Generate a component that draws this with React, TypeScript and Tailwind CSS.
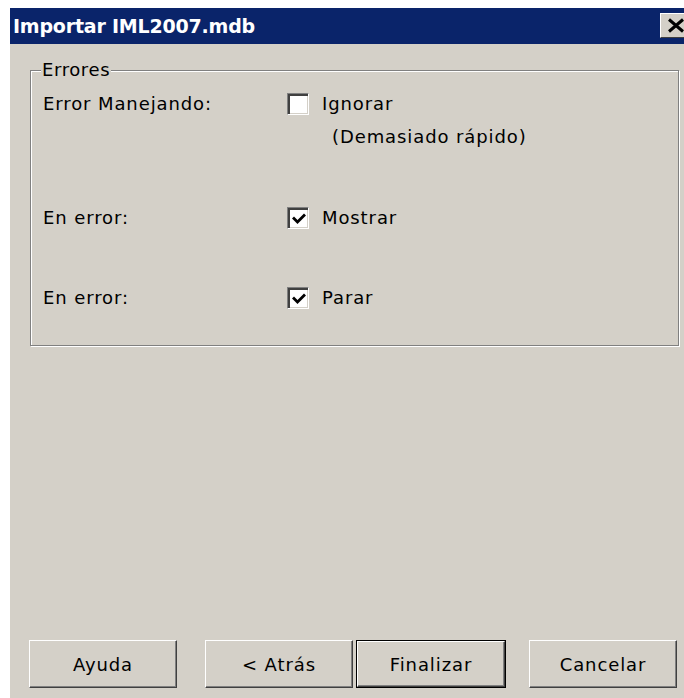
import { ReactNode } from 'react'

const font = { fontFamily: '"DejaVu Sans", Verdana, sans-serif' }

function CheckBox({ checked }: { checked?: boolean }) {
  return (
    <div className="w-[22px] h-[22px] shrink-0 bg-white border border-t-[#808080] border-l-[#808080] border-r-white border-b-white shadow-[inset_2px_2px_0_#404040,inset_-1px_-1px_0_#d4d0c8] flex items-center justify-center">
      {checked && (
        <svg width="14" height="14" viewBox="0 0 14 14" className="ml-[1px] mt-[1px]">
          <path d="M2 6.5 L5.5 10 L12 3.5" fill="none" stroke="#000" strokeWidth="2.8" strokeLinecap="square" />
        </svg>
      )}
    </div>
  )
}

function Row({ label, children, className }: { label: string; children: ReactNode; className?: string }) {
  return (
    <div className={'flex ' + (className ?? '')}>
      <div className="w-[244px] shrink-0 leading-[22px]">{label}</div>
      <div>{children}</div>
    </div>
  )
}

function Btn({ children, isDefault, className }: { children: ReactNode; isDefault?: boolean; className?: string }) {
  const inner = (
    <div className="h-full w-full flex items-center justify-center border border-t-white border-l-white border-r-[#404040] border-b-[#404040] shadow-[inset_-1px_-1px_0_#808080]">
      {children}
    </div>
  )
  if (isDefault) {
    return <div className={'h-[48px] border border-black ' + (className ?? '')}>{inner}</div>
  }
  return <div className={'h-[48px] ' + (className ?? '')}>{inner}</div>
}

export default function App() {
  return (
    <div className="w-[684px] h-[698px] bg-white pt-[8px] pl-[10px] overflow-hidden text-black text-[18px] tracking-[0.9px]" style={font}>
      <div className="h-full flex flex-col">
        {/* title bar */}
        <div className="h-[36px] bg-[#0a246a] flex items-start justify-between shrink-0">
          <div className="pl-[3px] pt-[5px] text-white font-bold text-[19px] tracking-[-0.2px] leading-[26px]">Importar IML2007.mdb</div>
          <div className="mt-[5px] mr-[-8px] w-[32px] h-[25px] bg-[#d4d0c8] border border-t-white border-l-white border-r-[#404040] border-b-[#404040] flex items-center justify-center">
            <svg width="18" height="15" viewBox="0 0 18 15">
              <path d="M2 1.5 L16 13.5 M16 1.5 L2 13.5" stroke="#000" strokeWidth="3" />
            </svg>
          </div>
        </div>

        {/* dialog body */}
        <div className="flex-1 bg-[#d4d0c8] flex flex-col">
          <fieldset className="mt-[16px] ml-[20px] mr-[5px] h-[286px] border border-[#808080] shadow-[inset_1px_1px_0_#fff,1px_1px_0_#fff] pl-[12px]">
            <legend className="ml-[-2px] px-[1px] leading-[20px] bg-[#d4d0c8] tracking-[0.6px]">Errores</legend>
            <Row label="Error Manejando:" className="mt-[13px]">
              <div className="flex items-center gap-[13px] h-[22px]">
                <CheckBox />
                <span className="leading-[22px]">Ignorar</span>
              </div>
              <div className="pl-[45px] mt-[11px] leading-[22px]">(Demasiado rápido)</div>
            </Row>
            <Row label="En error:" className="mt-[59px]">
              <div className="flex items-center gap-[13px] h-[22px]">
                <CheckBox checked />
                <span className="leading-[22px]">Mostrar</span>
              </div>
            </Row>
            <Row label="En error:" className="mt-[58px]">
              <div className="flex items-center gap-[13px] h-[22px]">
                <CheckBox checked />
                <span className="leading-[22px]">Parar</span>
              </div>
            </Row>
          </fieldset>

          <div className="mt-auto mb-[10px] flex pl-[19px]">
            <Btn className="w-[148px]">Ayuda</Btn>
            <Btn className="w-[148px] ml-[28px]">&lt; Atrás</Btn>
            <Btn className="w-[150px] ml-[3px]" isDefault>Finalizar</Btn>
            <Btn className="w-[148px] ml-[23px]">Cancelar</Btn>
          </div>
        </div>
      </div>
    </div>
  )
}
